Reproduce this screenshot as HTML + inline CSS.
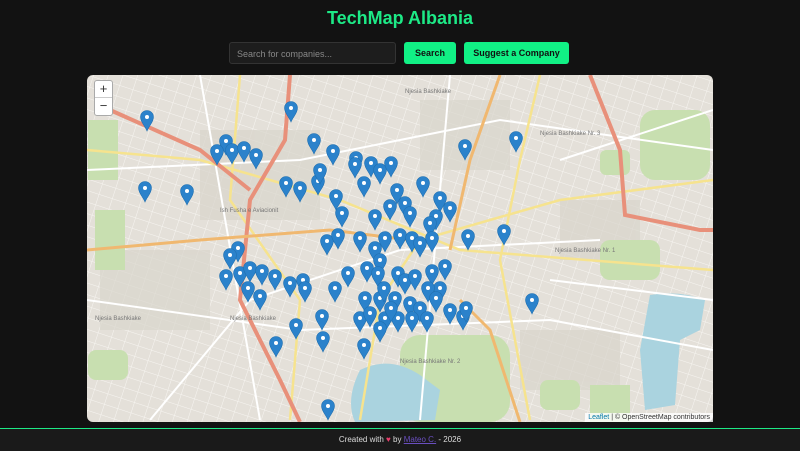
<!DOCTYPE html>
<html><head><meta charset="utf-8"><style>
html,body{margin:0;padding:0;width:800px;height:450px;overflow:hidden;background:#121212;font-family:"Liberation Sans",sans-serif}
h1{position:absolute;top:8px;left:0;width:800px;text-align:center;margin:0;font-size:18px;color:#1de986;font-weight:bold}
.inp{position:absolute;left:229px;top:42px;width:167px;height:22px;background:#1d1d1d;border:1px solid #333;border-radius:3px;color:#888;font-size:9px;line-height:22px;box-sizing:border-box;padding-left:7px}
.btn{position:absolute;top:42px;height:22px;background:#11f085;border-radius:3px;font-size:9px;font-weight:bold;color:#111;text-align:center;line-height:22px}
.map{position:absolute;left:87px;top:75px;width:626px;height:347px;border-radius:6px;overflow:hidden;background:#e4e0d9}
.zoom{position:absolute;left:94px;top:80px;width:17px;height:34px;background:#fff;border:1px solid #aaa;border-radius:3px;font-size:13px;text-align:center;line-height:16px;color:#333}
.attr{position:absolute;right:87px;top:413px;background:rgba(255,255,255,.8);font-size:7px;color:#333;padding:0 3px;height:9px;line-height:9px}
.foot{position:absolute;left:0;top:428px;width:800px;height:22px;background:#1a1a1a;border-top:1px solid #1de986;color:#ddd;font-size:8px;text-align:center;line-height:22px}
</style></head><body>
<h1>TechMap Albania</h1>
<div class="inp">Search for companies...</div>
<div class="btn" style="left:404px;width:52px">Search</div>
<div class="btn" style="left:464px;width:105px">Suggest a Company</div>
<div class="map">
<svg width="626" height="347" viewBox="87 75 626 347" xmlns="http://www.w3.org/2000/svg">
<defs><g id="m"><path d="M0 14 C-2 9 -6.5 5 -6.5 0 A6.5 6.5 0 0 1 6.5 0 C6.5 5 2 9 0 14Z" fill="#2b82cb" stroke="#2170b0" stroke-width=".6"/><circle r="2" fill="#fff"/></g>
<pattern id="st" width="14" height="11" patternUnits="userSpaceOnUse" patternTransform="rotate(18)"><path d="M0 0H14M0 0V11" stroke="#f7f5f1" stroke-width="1"/></pattern></defs>
<rect x="87" y="75" width="626" height="347" fill="url(#st)"/>
<g fill="#d9d5cc" opacity=".7"><rect x="200" y="130" width="120" height="90"/><rect x="420" y="100" width="90" height="70"/><rect x="560" y="200" width="80" height="60"/><rect x="100" y="250" width="110" height="80"/><rect x="520" y="330" width="100" height="60"/></g>
<g fill="#c8dfb0"><rect x="88" y="120" width="30" height="60"/><rect x="400" y="335" width="110" height="87" rx="20"/><rect x="600" y="240" width="60" height="40" rx="10"/><rect x="640" y="110" width="70" height="70" rx="15"/><rect x="590" y="385" width="40" height="37"/><rect x="95" y="210" width="30" height="60"/><rect x="600" y="150" width="30" height="25" rx="6"/><rect x="540" y="380" width="40" height="30" rx="8"/><rect x="88" y="350" width="40" height="30" rx="8"/></g>
<g fill="#aad3df"><path d="M360 370 Q390 355 420 375 L440 390 L435 420 L355 422 Q345 400 360 370Z"/><path d="M650 295 Q680 290 705 300 L700 330 L680 340 L675 405 L645 410 L640 350Z"/></g>
<g fill="none" stroke="#fff" stroke-width="2"><path d="M87 170 L300 160 L500 120 L713 150"/><path d="M150 420 L250 300 L400 250 L600 240"/><path d="M200 75 L260 420"/><path d="M450 75 L420 420"/><path d="M87 300 L300 330 L550 320 L713 350"/><path d="M560 160 L713 110"/><path d="M550 280 L713 300"/></g>
<g fill="none" stroke="#f6e38e" stroke-width="2.5"><path d="M87 150 L200 160 L340 200 L460 250 L713 270"/><path d="M240 75 L230 200 L300 300 L290 420"/><path d="M540 75 L520 160 L500 260 L530 420"/><path d="M360 420 L380 300 L420 240 L560 200 L713 180"/></g>
<g fill="none" stroke="#e8907a" stroke-width="4"><path d="M110 110 L200 150 L250 190"/><path d="M290 75 L285 140 L250 200 L240 300 L280 380 L300 422"/><path d="M590 75 L620 150 L625 215 L700 230 L713 230"/></g>
<g fill="none" stroke="#f0b870" stroke-width="3"><path d="M500 75 L470 160 L450 250"/><path d="M460 300 L490 330 L520 422"/><path d="M87 250 L200 240 L330 230 L410 240"/></g>
<g font-size="6" fill="#777" font-family="Liberation Sans,sans-serif"><text x="405" y="93">Njesia Bashkiake</text><text x="540" y="135">Njesia Bashkiake Nr. 3</text><text x="555" y="252">Njesia Bashkiake Nr. 1</text><text x="400" y="363">Njesia Bashkiake Nr. 2</text><text x="230" y="320">Njesia Bashkiake</text><text x="220" y="212">Ish Fusha e Aviacionit</text><text x="95" y="320">Njesia Bashkiake</text></g>
<g>
<use href="#m" x="147" y="117"/><use href="#m" x="291" y="108"/><use href="#m" x="226" y="141"/><use href="#m" x="217" y="151"/><use href="#m" x="232" y="150"/><use href="#m" x="244" y="148"/><use href="#m" x="256" y="155"/><use href="#m" x="314" y="140"/><use href="#m" x="333" y="151"/><use href="#m" x="356" y="158"/><use href="#m" x="371" y="163"/><use href="#m" x="380" y="170"/><use href="#m" x="391" y="163"/><use href="#m" x="355" y="164"/><use href="#m" x="364" y="183"/><use href="#m" x="465" y="146"/><use href="#m" x="516" y="138"/><use href="#m" x="145" y="188"/><use href="#m" x="187" y="191"/><use href="#m" x="286" y="183"/><use href="#m" x="300" y="188"/><use href="#m" x="318" y="181"/><use href="#m" x="320" y="170"/><use href="#m" x="336" y="196"/><use href="#m" x="342" y="213"/><use href="#m" x="375" y="216"/><use href="#m" x="390" y="206"/><use href="#m" x="405" y="203"/><use href="#m" x="410" y="213"/><use href="#m" x="397" y="190"/><use href="#m" x="423" y="183"/><use href="#m" x="440" y="198"/><use href="#m" x="450" y="208"/><use href="#m" x="436" y="216"/><use href="#m" x="430" y="223"/><use href="#m" x="468" y="236"/><use href="#m" x="504" y="231"/><use href="#m" x="327" y="241"/><use href="#m" x="338" y="235"/><use href="#m" x="360" y="238"/><use href="#m" x="375" y="248"/><use href="#m" x="385" y="238"/><use href="#m" x="400" y="235"/><use href="#m" x="412" y="238"/><use href="#m" x="420" y="243"/><use href="#m" x="432" y="238"/><use href="#m" x="238" y="248"/><use href="#m" x="230" y="255"/><use href="#m" x="226" y="276"/><use href="#m" x="240" y="273"/><use href="#m" x="250" y="268"/><use href="#m" x="262" y="271"/><use href="#m" x="275" y="276"/><use href="#m" x="290" y="283"/><use href="#m" x="303" y="280"/><use href="#m" x="248" y="288"/><use href="#m" x="260" y="296"/><use href="#m" x="335" y="288"/><use href="#m" x="348" y="273"/><use href="#m" x="367" y="268"/><use href="#m" x="380" y="260"/><use href="#m" x="378" y="273"/><use href="#m" x="398" y="273"/><use href="#m" x="405" y="280"/><use href="#m" x="415" y="276"/><use href="#m" x="432" y="271"/><use href="#m" x="445" y="266"/><use href="#m" x="440" y="288"/><use href="#m" x="428" y="288"/><use href="#m" x="436" y="298"/><use href="#m" x="365" y="298"/><use href="#m" x="380" y="298"/><use href="#m" x="395" y="298"/><use href="#m" x="410" y="303"/><use href="#m" x="420" y="308"/><use href="#m" x="360" y="318"/><use href="#m" x="370" y="313"/><use href="#m" x="385" y="318"/><use href="#m" x="398" y="318"/><use href="#m" x="412" y="318"/><use href="#m" x="427" y="318"/><use href="#m" x="450" y="310"/><use href="#m" x="463" y="316"/><use href="#m" x="466" y="308"/><use href="#m" x="322" y="316"/><use href="#m" x="323" y="338"/><use href="#m" x="296" y="325"/><use href="#m" x="380" y="328"/><use href="#m" x="364" y="345"/><use href="#m" x="276" y="343"/><use href="#m" x="532" y="300"/><use href="#m" x="328" y="406"/><use href="#m" x="305" y="288"/><use href="#m" x="384" y="288"/><use href="#m" x="391" y="308"/>
</g>
</svg>
</div>
<div class="zoom">+<div style="border-top:1px solid #ccc">−</div></div>
<div class="attr"><span style="color:#0078a8">Leaflet</span> | © OpenStreetMap contributors</div>
<div class="foot">Created with <span style="color:#e83e6c">♥</span> by <span style="color:#6a4fc0;text-decoration:underline">Mateo C.</span> - 2026</div>
</body></html>
